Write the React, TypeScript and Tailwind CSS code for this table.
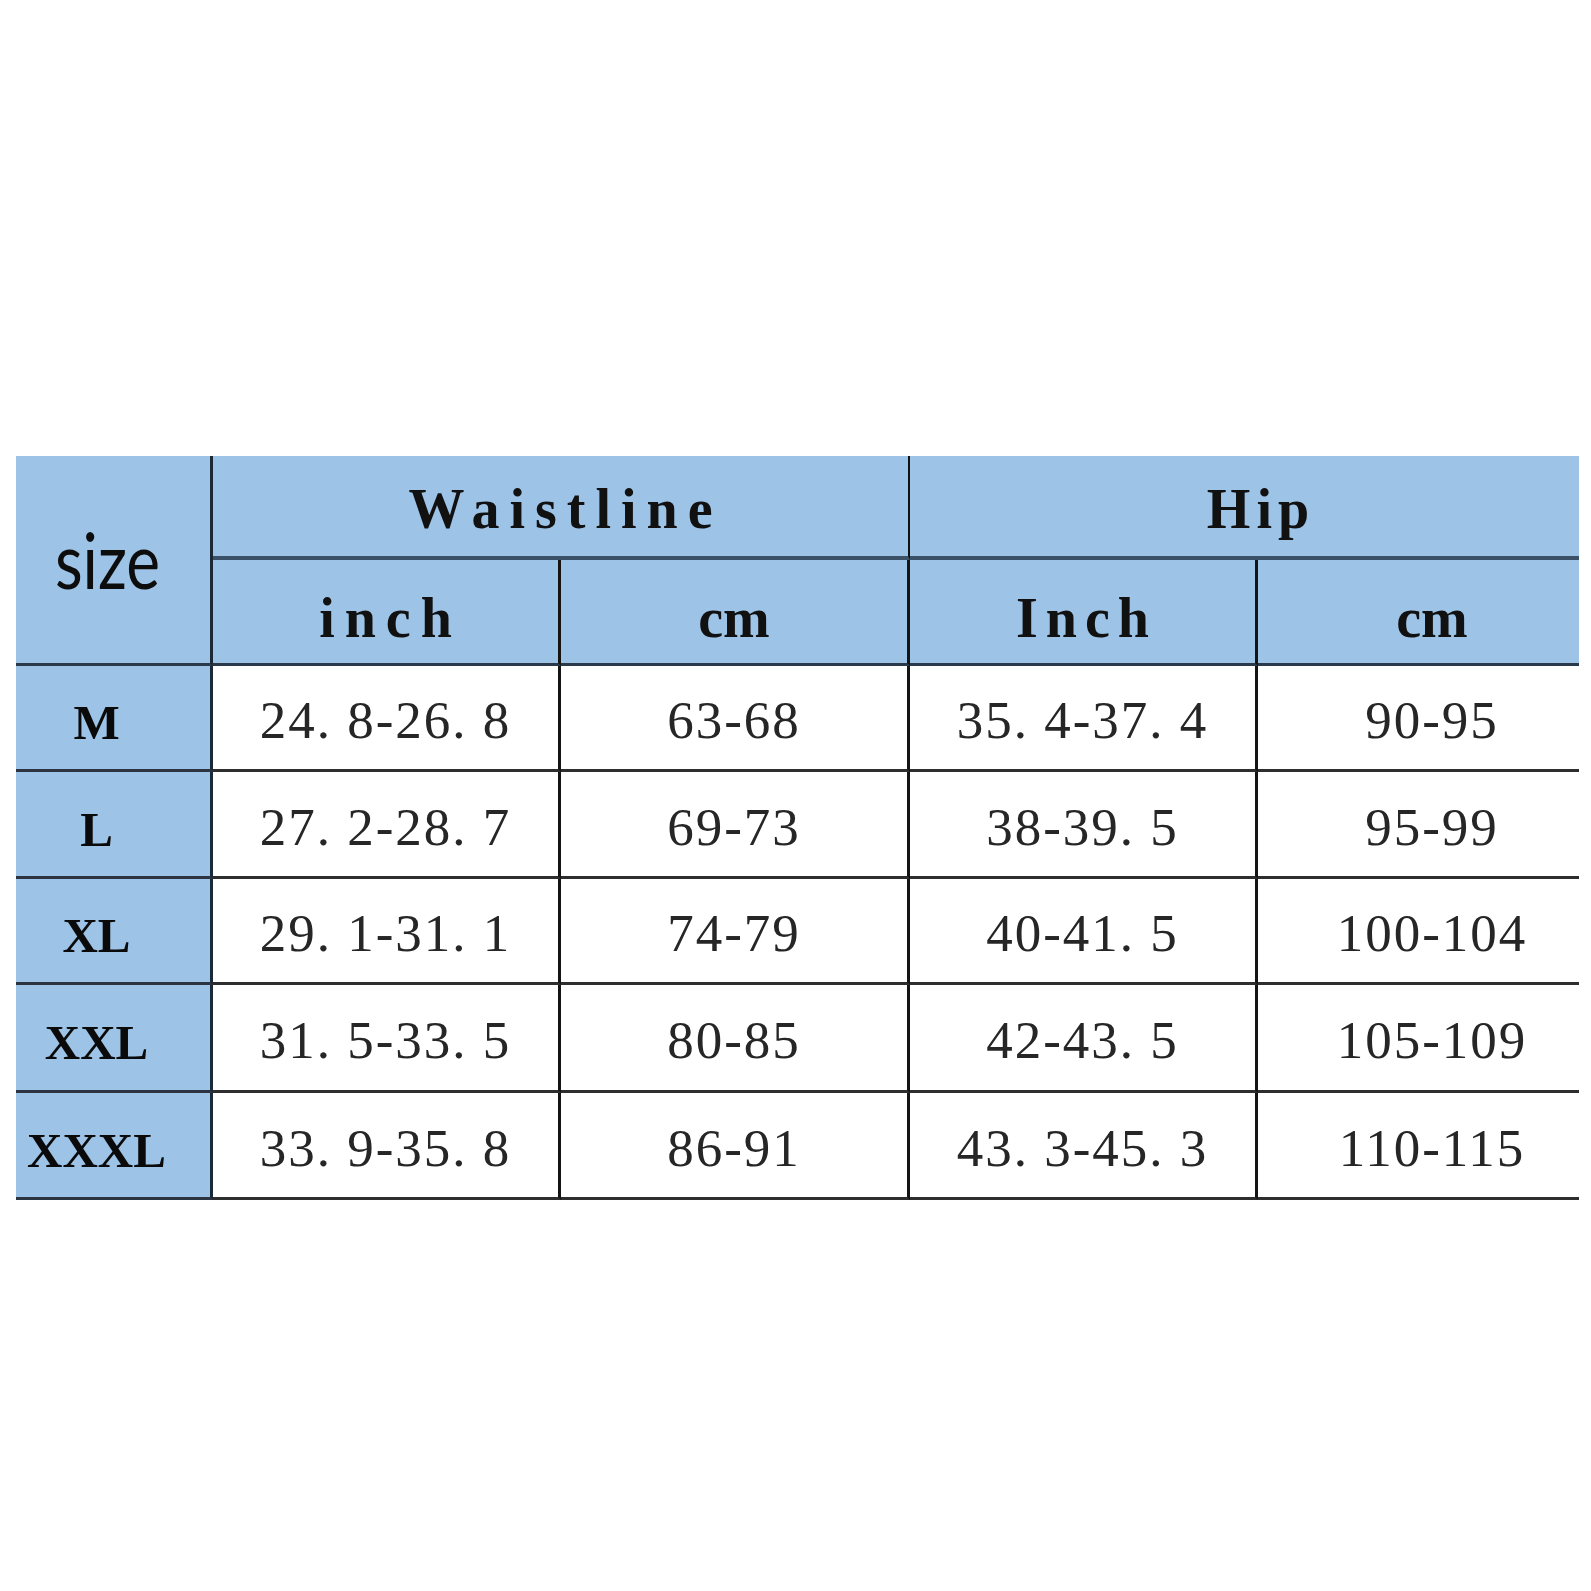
const rows = [
  { size: 'M', inch: '24. 8-26. 8', cm: '63-68', hipInch: '35. 4-37. 4', hipCm: '90-95' },
  { size: 'L', inch: '27. 2-28. 7', cm: '69-73', hipInch: '38-39. 5', hipCm: '95-99' },
  { size: 'XL', inch: '29. 1-31. 1', cm: '74-79', hipInch: '40-41. 5', hipCm: '100-104' },
  { size: 'XXL', inch: '31. 5-33. 5', cm: '80-85', hipInch: '42-43. 5', hipCm: '105-109' },
  { size: 'XXXL', inch: '33. 9-35. 8', cm: '86-91', hipInch: '43. 3-45. 3', hipCm: '110-115' },
]

function NumCell({ value, last }: { value: string; last?: boolean }) {
  return (
    <div
      className={`flex items-center justify-center bg-white pt-[6px] font-['Liberation_Serif','Times_New_Roman',serif] text-[53px] leading-none tracking-[2px] text-[#262626] border-b-[3px] border-b-[#2e2e2e] ${
        last ? '' : 'border-r-[3px] border-r-[#141414]'
      }`}
    >
      {value}
    </div>
  )
}

export default function App() {
  return (
    <div className="w-[1591px] h-[1591px] bg-white pt-[456px] pl-[16px]">
      <div className="w-[1563px] overflow-hidden">
        <div className="grid w-[1590px] grid-cols-[197px_348px_349px_348px_348px] grid-rows-[104px_106px_106px_107px_106px_108px_107px] font-['Liberation_Serif','Times_New_Roman',serif]">
          {/* size header */}
          <div className="row-span-2 flex items-center justify-center bg-[#9dc3e6] pr-[11px] border-r-[3px] border-r-[#1c2a38] border-b-[3px] border-b-[#2b3a4a]">
            <span className="inline-block scale-y-[1.22] font-['Lato','Open_Sans',sans-serif] text-[64px] leading-none text-[#0d0d0d]">
              size
            </span>
          </div>

          {/* group headers */}
          <div className="col-span-2 flex items-center justify-center bg-[#9dc3e6] pt-[6px] pl-[10px] text-[56px] font-bold leading-none tracking-[10px] text-[#111] border-r-[2px] border-r-[#111] border-b-4 border-b-[#3a5168]">
            Waistline
          </div>
          <div className="col-span-2 flex items-center justify-center bg-[#9dc3e6] pt-[6px] pl-[6px] text-[56px] font-bold leading-none tracking-[6px] text-[#111] border-b-4 border-b-[#3a5168]">
            Hip
          </div>

          {/* unit headers */}
          <div className="flex items-center justify-center bg-[#9dc3e6] pt-[12px] pl-[10px] text-[56px] font-bold leading-none tracking-[10px] text-[#111] border-r-[3px] border-r-[#141414] border-b-[3px] border-b-[#2b3a4a]">
            inch
          </div>
          <div className="flex items-center justify-center bg-[#9dc3e6] pt-[12px] text-[56px] font-bold leading-none text-[#111] border-r-[3px] border-r-[#141414] border-b-[3px] border-b-[#2b3a4a]">
            cm
          </div>
          <div className="flex items-center justify-center bg-[#9dc3e6] pt-[12px] pl-[8px] text-[56px] font-bold leading-none tracking-[8px] text-[#111] border-r-[3px] border-r-[#141414] border-b-[3px] border-b-[#2b3a4a]">
            Inch
          </div>
          <div className="flex items-center justify-center bg-[#9dc3e6] pt-[12px] text-[56px] font-bold leading-none text-[#111] border-b-[3px] border-b-[#2b3a4a]">
            cm
          </div>

          {/* data rows */}
          {rows.map(r => (
            <div key={r.size} className="contents">
              <div className="flex items-center justify-center bg-[#9dc3e6] pt-[10px] pr-[33px] text-[49px] font-bold leading-none text-[#0a0a0a] border-r-[3px] border-r-[#1c2a38] border-b-[3px] border-b-[#2b3440]">
                {r.size}
              </div>
              <NumCell value={r.inch} />
              <NumCell value={r.cm} />
              <NumCell value={r.hipInch} />
              <NumCell value={r.hipCm} last />
            </div>
          ))}
        </div>
      </div>
    </div>
  )
}
